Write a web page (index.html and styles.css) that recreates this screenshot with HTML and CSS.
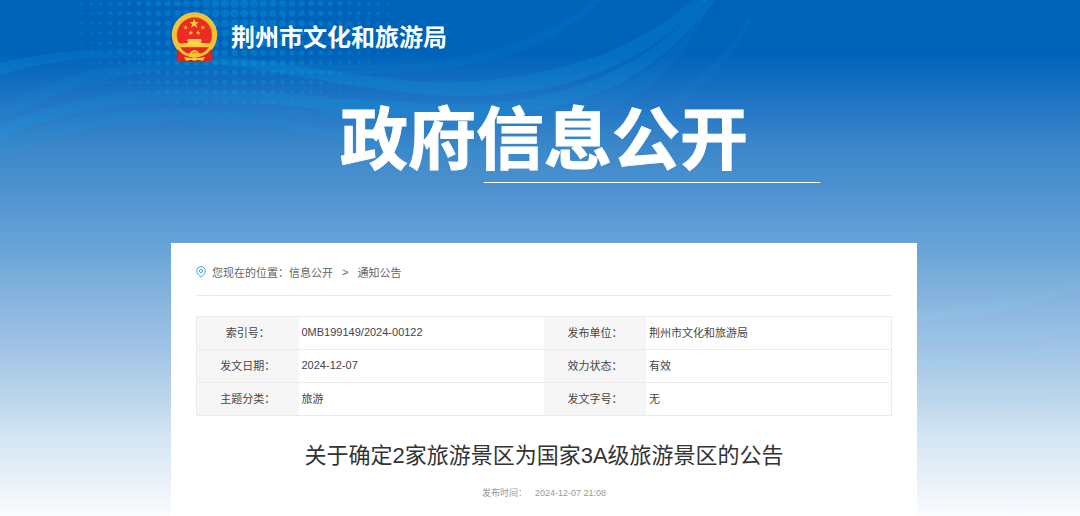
FILE: index.html
```html
<!DOCTYPE html>
<html lang="zh-CN">
<head>
<meta charset="utf-8">
<meta name="viewport" content="width=device-width, initial-scale=1">
<title>关于确定2家旅游景区为国家3A级旅游景区的公告</title>
<link rel="stylesheet" href="styles.css">
</head>
<body>
<svg class="backdrop" viewBox="0 0 1080 516" preserveAspectRatio="xMidYMin slice" aria-hidden="true">
  <defs>
    <linearGradient id="wave" x1="0" y1="0" x2="750" y2="0" gradientUnits="userSpaceOnUse">
      <stop offset="0" stop-color="#0aa5e2" stop-opacity=".2"/>
      <stop offset=".2" stop-color="#0aa5e2" stop-opacity=".1"/>
      <stop offset=".38" stop-color="#0aa5e2" stop-opacity=".2"/>
      <stop offset=".75" stop-color="#0aa5e2" stop-opacity=".2"/>
      <stop offset="1" stop-color="#0aa5e2" stop-opacity=".14"/>
    </linearGradient>
    <linearGradient id="faint" x1="0" y1="0" x2="750" y2="0" gradientUnits="userSpaceOnUse">
      <stop offset="0" stop-color="#0aa5e2" stop-opacity=".1"/>
      <stop offset="1" stop-color="#0aa5e2" stop-opacity=".07"/>
    </linearGradient>
    <linearGradient id="soft" x1="0" y1="0" x2="0" y2="1">
      <stop offset="0" stop-color="#8bd4ee" stop-opacity="0"/>
      <stop offset="1" stop-color="#8bd4ee" stop-opacity=".2"/>
    </linearGradient>
  </defs>
  <g id="dots" fill="#0aa0dc"></g>
  <g fill="url(#wave)">
    <path d="M0 63C60 48 130 46 200 53C300 63 390 85 460 82C570 78 650 40 692 0H706C655 55 580 94 470 96C380 97 290 70 190 61C110 54 50 58 0 75Z"/>
    <path d="M0 126C60 98 140 86 220 90C310 94 390 104 470 104C580 102 660 55 704 0H716C660 68 600 112 480 117C390 119 310 104 220 101C130 99 50 112 0 141Z"/>
  </g>
  <g fill="url(#faint)">
    <path d="M0 108C70 64 160 54 250 60C340 68 400 67 460 57C520 46 570 22 594 0H602C570 32 520 58 460 66C390 75 310 75 240 70C150 66 80 76 0 122Z"/>
    <path d="M0 144C70 112 150 104 230 112C320 123 400 148 470 151C590 152 700 105 748 18H752C710 108 610 164 470 160C380 155 310 127 230 122C140 115 70 126 0 160Z"/>
    <path d="M240 96C330 110 410 122 490 118C590 113 670 75 711 0C675 95 590 132 490 133C400 132 320 108 240 96Z"/>
  </g>
  <g fill="url(#soft)">
    <path d="M820 305C930 318 1020 302 1080 275V288C1010 316 910 330 820 316Z"/>
    <path d="M820 318C920 338 1010 332 1080 318V332C990 344 910 350 820 330Z"/>
    <path d="M820 345C920 363 1010 356 1080 340V352C990 368 910 374 820 357Z"/>
    <path d="M820 380C910 402 1010 400 1080 388V400C1000 414 900 412 820 392Z" opacity=".35"/>
  </g>
</svg>

<div class="page">
  <header class="site-header">
    <svg class="emblem" viewBox="18 11 140 150" aria-hidden="true">
      <path d="M36 112l-2 44 12-5 8 9h68l8-9 12 5-2-44z" fill="#d5170f"/>
      <circle cx="88" cy="80" r="68" fill="#fbc636"/>
      <circle cx="88" cy="80" r="62" fill="none" stroke="#eeae2c" stroke-width="2"/>
      <circle cx="88" cy="80" r="53" fill="#ed2b22" stroke="#d99521" stroke-width="2"/>
      <path d="M40 105h96a53 53 0 0 1-96 0z" fill="#fbc83c"/>
      <path d="M45 117h86a50 50 0 0 1-86 0z" fill="#e42a1e"/>
      <path d="M69 92h38l4 6h-3v6h13v7H55v-7h13v-6h-3z" fill="#ffd34c"/>
      <path d="M40 122q8 18 30 22l-4 15-20-1-12-2z" fill="#e0251a"/>
      <path d="M136 122q-8 18-30 22l4 15 20-1 12-2z" fill="#e0251a"/>
      <path d="M43 122q18 21 45 21t45-21" fill="none" stroke="#fbc636" stroke-width="7"/>
      <path d="M66 137q10-2 14-9 8-6 16 0 4 7 14 9-22 12-44 0z" fill="#fbc636"/>
      <path d="M80 135q8-7 16 0" fill="none" stroke="#d9701c" stroke-width="3"/>
      <path d="M56 145l22 5q10-5 20 0l22-5-7 12-16-3q-9 6-18 0l-16 3z" fill="#fcc93f"/>
      <g fill="#fbc93b">
        <path d="M87 31l4 10h10l-8 7 4 11-10-7-10 7 4-11-8-7h10z"/>
        <path d="M61 50l2 5h5l-4 3 2 6-5-4-5 4 2-6-4-3h5z"/>
        <path d="M113 50l2 5h5l-4 3 2 6-5-4-5 4 2-6-4-3h5z"/>
        <path d="M77 66l2 5h5l-4 3 2 6-5-4-5 4 2-6-4-3h5z"/>
        <path d="M99 66l2 5h5l-4 3 2 6-5-4-5 4 2-6-4-3h5z"/>
      </g>
    </svg>
    <span class="site-name">荆州市文化和旅游局</span>
  </header>

  <div class="banner">
    <h1 class="banner-title">政府信息公开</h1>
    <div class="banner-line"></div>
  </div>

  <main class="card">
    <nav class="crumbs" aria-label="您现在的位置">
      <svg class="pin" viewBox="0 0 10 12" fill="none" stroke="#35ace5" aria-hidden="true">
        <path d="M5 11.2C2.8 9.2.7 7.3.7 4.9a4.3 4.3 0 0 1 8.6 0C9.3 7.3 7.2 9.2 5 11.2z"/>
        <circle cx="5" cy="5" r="1.6"/>
      </svg>
      <span>您现在的位置：</span>
      <a href="#info">信息公开</a>
      <span class="crumb-sep">&gt;</span>
      <a href="#notice">通知公告</a>
    </nav>

    <table class="meta">
      <tr><th scope="row">索引号：</th><td>0MB199149/2024-00122</td><th scope="row">发布单位：</th><td>荆州市文化和旅游局</td></tr>
      <tr><th scope="row">发文日期：</th><td>2024-12-07</td><th scope="row">效力状态：</th><td>有效</td></tr>
      <tr><th scope="row">主题分类：</th><td>旅游</td><th scope="row">发文字号：</th><td>无</td></tr>
    </table>

    <h2 class="article-title">关于确定2家旅游景区为国家3A级旅游景区的公告</h2>
    <p class="published"><span>发布时间：</span><time datetime="2024-12-07T21:08">2024-12-07 21:08</time></p>
  </main>
</div>
<script src="dots.js"></script>
</body>
</html>
```
FILE: styles.css
```css
* {
  box-sizing: border-box;
}

html {
  min-height: 100%;
  background: #fff;
}

body {
  margin: 0;
  min-height: 100vh;
  overflow-x: hidden;
  position: relative;
  font-family: "Liberation Sans", "Noto Sans CJK SC", sans-serif;
  font-size: 11px;
  color: #444;
  background: linear-gradient(#0063ba 0, #0063ba 54px, #1f74c4 100px, #3d88ca 150px, #4d92cf 190px, #5a9ad4 215px, #65a2d6 243px, #76abd9 270px, #9fc2e5 345px, #bdd6ec 400px, #d6e6f3 440px, #ebf2fa 484px, #fafcfe 516px);
}

.backdrop {
  position: absolute;
  top: 0;
  left: 0;
  width: 100%;
  height: 516px;
}

.page {
  position: relative;
  padding-left: 8px;
}

.site-header,
.banner,
.card {
  width: 100%;
  max-width: 746px;
  margin: 0 auto;
}

.site-header {
  display: flex;
  align-items: center;
  gap: 13px;
  padding-top: 12px;
}

.emblem {
  width: 47px;
  height: 50px;
}

.site-name {
  padding-top: 2px;
  font-size: 24px;
  line-height: 32px;
  font-weight: 700;
  color: #fff;
}

.banner {
  padding: 38px 0 60px;
  color: #fff;
}

.banner-title {
  margin: 0 0 2px;
  font-size: 68px;
  line-height: 80px;
  font-weight: 700;
  text-align: center;
  -webkit-text-stroke: 1px #fff;
}

.banner-line {
  width: 45%;
  height: 1px;
  margin-left: 42%;
  background: #fff;
}

.card {
  padding: 16px 25px;
  background: #fff;
}

.crumbs {
  display: flex;
  align-items: center;
  height: 37px;
  padding-bottom: 10px;
  border-bottom: 1px solid #ebebeb;
  color: #666;
}

.crumbs a {
  color: inherit;
  text-decoration: none;
}

.pin {
  width: 10px;
  height: 12px;
  margin-right: 6px;
}

.crumb-sep {
  margin: 0 9px;
}

.meta {
  width: 100%;
  margin-top: 20px;
  table-layout: fixed;
  border-collapse: collapse;
  border: 1px solid #ebebeb;
}

.meta tr {
  height: 33px;
  border-bottom: 1px solid #ebebeb;
}

.meta th,
.meta td {
  padding: 0 3px 2px;
}

.meta th {
  width: 102px;
  font-weight: 400;
  text-align: center;
  background: #f6f6f6;
}

.article-title {
  margin: 24px 0 0;
  font-size: 22px;
  line-height: 32px;
  font-weight: 400;
  text-align: center;
  color: #333;
}

.published {
  display: flex;
  justify-content: center;
  gap: 8px;
  margin: 14px 0 0;
  font-size: 9px;
  line-height: 14px;
  color: #999;
}
```
FILE: dots.js
```js
// Halftone dots that shrink away from the top of the banner.
const group = document.getElementById("dots");
for (let row = 0; row < 19; row++) {
  for (let col = 0; col < 45; col++) {
    const x = 5 + col * 9.57;
    const y = 3.5 + row * 9.87;
    const d = Math.hypot((x - 236) / 212, y / 185);
    const r = 4.6 * (1 - d);
    if (r < 0.3) continue;
    const dot = document.createElementNS("http://www.w3.org/2000/svg", "circle");
    dot.setAttribute("cx", x);
    dot.setAttribute("cy", y);
    dot.setAttribute("r", r);
    dot.setAttribute("opacity", 0.36 - d * 0.1);
    group.appendChild(dot);
  }
}
```
